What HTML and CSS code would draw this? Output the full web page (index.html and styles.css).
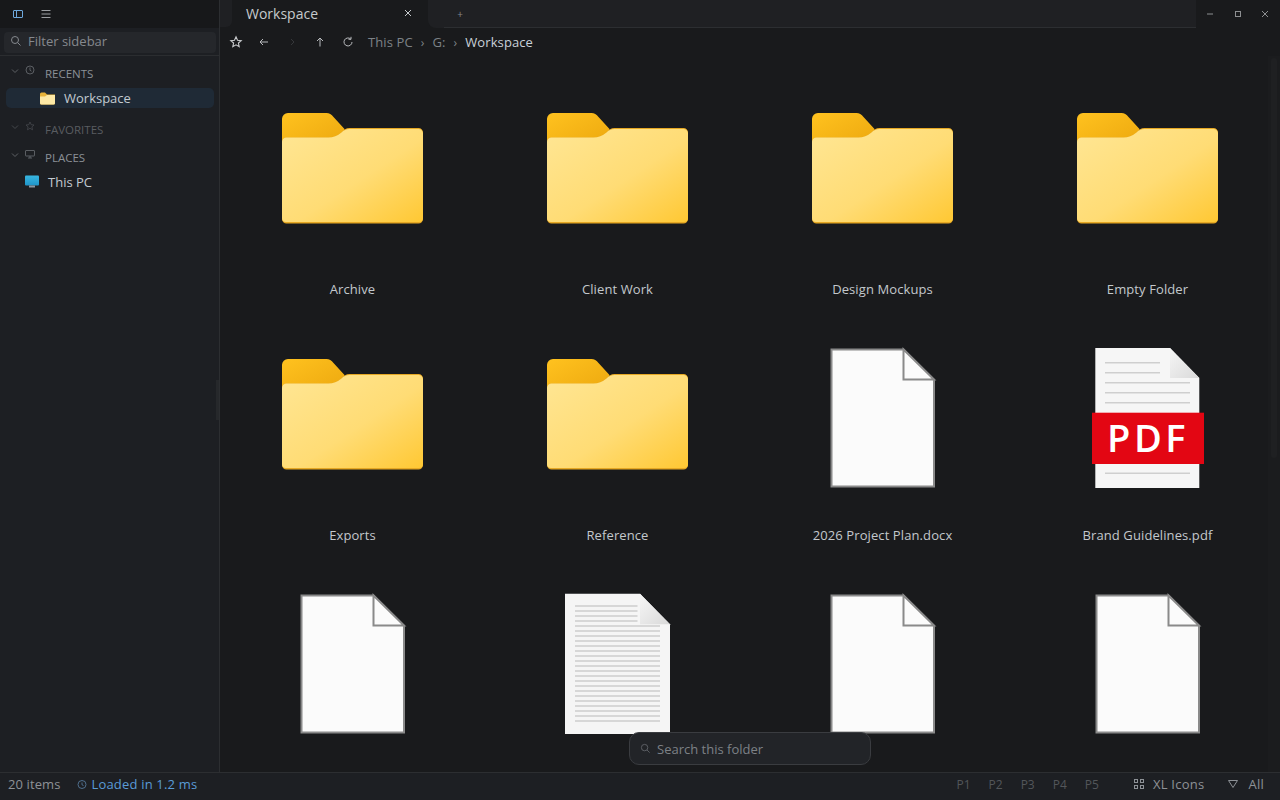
FILE: index.html
```html
<!DOCTYPE html>
<html lang="en">
<head>
<meta charset="utf-8">
<title>Workspace</title>
<link rel="stylesheet" href="styles.css">
</head>
<body>
<svg class="defs" width="0" height="0" aria-hidden="true">
  <defs>
    <linearGradient id="folderFront" x1="0" y1="0" x2="1" y2="1">
      <stop offset="0" stop-color="#ffe694"/>
      <stop offset="0.55" stop-color="#ffdc75"/>
      <stop offset="1" stop-color="#ffc833"/>
    </linearGradient>
    <linearGradient id="folderBack" x1="0" y1="0" x2="1" y2="1">
      <stop offset="0" stop-color="#ffc21f"/>
      <stop offset="1" stop-color="#eca70e"/>
    </linearGradient>
    <linearGradient id="foldGrad" x1="0" y1="0" x2="1" y2="1">
      <stop offset="0" stop-color="#f6f6f6"/>
      <stop offset="1" stop-color="#d9d9d9"/>
    </linearGradient>
    <symbol id="folder" viewBox="0.5 0 160 160">
      <path fill="url(#folderBack)" d="M9.500 52V31a6 6 0 0 1 6-6H54q4 0 7 4L72 41V60H9.500z"/>
      <path fill="#e6a823" d="M9.500 54a4.500 4.500 0 0 1 4.500-4.500H56q7 0 13-5q3-4.500 8-4.500H146a4.500 4.500 0 0 1 4.500 4.500V131a4.500 4.500 0 0 1-4.500 4.500H14a4.500 4.500 0 0 1-4.500-4.500z"/>
      <path fill="url(#folderFront)" d="M9.500 54a4.500 4.500 0 0 1 4.500-4.500H56q7 0 13-5q3-3.500 8-3.500H146a4.500 4.500 0 0 1 4.500 4.500V130a4 4 0 0 1-4 4H13.500a4 4 0 0 1-4-4z"/>
    </symbol>
    <symbol id="blank" viewBox="0.5 0 160 160">
      <path fill="#fbfbfb" stroke="#8a8a8a" stroke-width="2" d="M29 15.500H101L131.500 46V152.500H29z"/>
      <path fill="#fbfbfb" stroke="#8a8a8a" stroke-width="2" d="M101 15.500V45.500H131.500z"/>
    </symbol>
    <symbol id="pdf" viewBox="0.5 0 160 160">
      <path fill="#f6f6f6" d="M27.800 14H102.500L131.800 44V154H27.800z"/>
      <path fill="url(#foldGrad)" d="M102.500 14V44H131.800z"/>
      <path stroke="#cfcfcf" stroke-width="1.400" d="M37.500 28.700H92.500M37.500 38.700H92.500M37.500 48.700H122.500M37.500 58.700H122.500M37.500 68.700H122.500M37.500 139.300H122.500"/>
      <rect x="24.500" y="78.700" width="112" height="51.300" fill="#e30613"/>
      <text class="pdf-label" x="80.500" y="117.700" text-anchor="middle">PDF</text>
    </symbol>
    <symbol id="text" viewBox="0.5 0 160 160">
      <path fill="#f5f5f5" d="M27.500 13.700H102.500L132.500 44.300V154H27.500z"/>
      <path fill="url(#foldGrad)" d="M102.500 13.700V44.300H132.500z"/>
      <path stroke="#cdcdcd" stroke-width="1.500" d="M37.500 26H100M37.500 31H100M37.500 36H100M37.500 41H100M37.500 46H122.500M37.500 51H122.500M37.500 56H122.500M37.500 61H122.500M37.500 66H122.500M37.500 71H122.500M37.500 76H122.500M37.500 81H122.500M37.500 86H122.500M37.500 91H122.500M37.500 96H122.500M37.500 101H122.500M37.500 106H122.500M37.500 111H122.500M37.500 116H122.500M37.500 121H122.500M37.500 126H122.500M37.500 131H122.500M37.500 136H122.500M37.500 141H122.500"/>
    </symbol>
  </defs>
</svg>

<div class="app">
  <aside class="sidebar">
    <div class="side-top">
      <button class="icon-btn blue" aria-label="Toggle sidebar">
        <svg width="12" height="12" viewBox="0 0 12 12" fill="none" stroke="currentColor"><rect x="1.500" y="2.500" width="9" height="7" rx="0.500"/><path d="M4.500 2.500v7"/></svg>
      </button>
      <button class="icon-btn" aria-label="Menu">
        <svg width="12" height="12" viewBox="0 0 12 12" fill="none" stroke="currentColor"><path d="M1.500 2.500h9M1.500 6h9M1.500 9.500h9"/></svg>
      </button>
    </div>
    <div class="filter-wrap">
      <div class="filter">
        <svg width="12" height="12" viewBox="0 0 12 12" fill="none" stroke="currentColor"><circle cx="5" cy="5" r="3.500"/><path d="M7.700 7.700L10.500 10.500"/></svg>
        <span>Filter sidebar</span>
      </div>
    </div>
    <nav class="side-nav">
      <div class="section first">
        <svg class="chev" width="10" height="10" viewBox="0 0 10 10" fill="none" stroke="currentColor"><path d="M2 3.500L5 6.500L8 3.500"/></svg>
        <svg class="sec-icon" width="10" height="10" viewBox="0 0 10 10" fill="none" stroke="currentColor" stroke-width="0.800"><circle cx="5" cy="5" r="4"/><path d="M5 2.500V5.300L6.500 6.200"/></svg>
        <span>RECENTS</span>
      </div>
      <div class="side-row active">
        <svg class="row-folder" width="15" height="13" viewBox="0 0 15 13"><path fill="#e8b33a" d="M0 2a1.500 1.500 0 0 1 1.500-1.500H5L7 2.500H15V11a1.500 1.500 0 0 1-1.500 1.500H1.500A1.500 1.500 0 0 1 0 11z"/><path fill="#fde9a6" d="M0 4.500H5L7 3H15V11a1.500 1.500 0 0 1-1.500 1.500H1.500A1.500 1.500 0 0 1 0 11z"/></svg>
        <span>Workspace</span>
      </div>
      <div class="section dim">
        <svg class="chev" width="10" height="10" viewBox="0 0 10 10" fill="none" stroke="currentColor"><path d="M2 3.500L5 6.500L8 3.500"/></svg>
        <svg class="sec-icon" width="10" height="10" viewBox="0 0 10 10" fill="none" stroke="currentColor" stroke-width="0.800"><path d="M5 1L6.200 3.700L9 4L6.900 5.900L7.500 8.800L5 7.300L2.500 8.800L3.100 5.900L1 4L3.800 3.700z"/></svg>
        <span>FAVORITES</span>
      </div>
      <div class="section places">
        <svg class="chev" width="10" height="10" viewBox="0 0 10 10" fill="none" stroke="currentColor"><path d="M2 3.500L5 6.500L8 3.500"/></svg>
        <svg class="sec-icon" width="10" height="10" viewBox="0 0 10 10" fill="none" stroke="currentColor" stroke-width="0.800"><rect x="0.500" y="1.500" width="9" height="5.500" rx="0.500"/><path d="M5 7v2M3 9h4"/></svg>
        <span>PLACES</span>
      </div>
      <div class="side-row pc">
        <svg class="row-pc" width="14" height="14" viewBox="0 0 14 14"><defs><linearGradient id="screen" x1="0" y1="0" x2="0" y2="1"><stop offset="0" stop-color="#38b6e0"/><stop offset="1" stop-color="#1f94c8"/></linearGradient></defs><rect x="0" y="0.500" width="14" height="10" rx="1" fill="url(#screen)"/><rect x="4" y="10.500" width="6" height="2" fill="#8b96a0"/></svg>
        <span>This PC</span>
      </div>
    </nav>
    <div class="resize-grip"></div>
  </aside>

  <main class="main">
    <header class="tabbar">
      <div class="tab-lead"></div>
      <div class="tab">
        <span class="tab-title">Workspace</span>
        <svg class="tab-close" width="8" height="8" viewBox="0 0 8 8" fill="none" stroke="currentColor"><path d="M1 1L7 7M7 1L1 7"/></svg>
      </div>
      <div class="tab-rest">
        <div class="tab-line"><span class="tab-new">+</span></div>
      </div>
      <div class="win-controls">
        <svg width="10" height="10" viewBox="0 0 10 10" fill="none" stroke="currentColor"><path d="M2 5H8"/></svg>
        <svg width="10" height="10" viewBox="0 0 10 10" fill="none" stroke="currentColor"><rect x="2.500" y="2.500" width="5" height="5"/></svg>
        <svg width="10" height="10" viewBox="0 0 10 10" fill="none" stroke="currentColor"><path d="M2 2L8 8M8 2L2 8"/></svg>
      </div>
    </header>

    <div class="toolbar">
      <svg class="tool star" width="14" height="14" viewBox="0 0 14 14" fill="none" stroke="currentColor" stroke-width="1.100"><path d="M7 1.800L8.500 5.200L12.200 5.600L9.400 8L10.200 11.700L7 9.800L3.800 11.700L4.600 8L1.800 5.600L5.500 5.200z"/></svg>
      <svg class="tool" width="12" height="12" viewBox="0 0 12 12" fill="none" stroke="currentColor"><path d="M10 6H2M5 3L2 6L5 9"/></svg>
      <svg class="tool off" width="12" height="12" viewBox="0 0 12 12" fill="none" stroke="currentColor"><path d="M5 3L8 6L5 9"/></svg>
      <svg class="tool" width="12" height="12" viewBox="0 0 12 12" fill="none" stroke="currentColor"><path d="M6 10.500V2M3 5L6 2L9 5"/></svg>
      <svg class="tool" width="12" height="12" viewBox="0 0 12 12" fill="none" stroke="currentColor"><path d="M10 6a4 4 0 1 1-1.300-3M9 .800V3.300H6.500"/></svg>
      <div class="crumbs">
        <span>This PC</span><i>›</i><span>G:</span><i>›</i><span class="current">Workspace</span>
      </div>
    </div>

    <div class="content">
      <div class="grid">
        <div class="item"><svg class="big"><use href="#folder"/></svg><span>Archive</span></div>
        <div class="item"><svg class="big"><use href="#folder"/></svg><span>Client Work</span></div>
        <div class="item"><svg class="big"><use href="#folder"/></svg><span>Design Mockups</span></div>
        <div class="item"><svg class="big"><use href="#folder"/></svg><span>Empty Folder</span></div>
        <div class="item"><svg class="big"><use href="#folder"/></svg><span>Exports</span></div>
        <div class="item"><svg class="big"><use href="#folder"/></svg><span>Reference</span></div>
        <div class="item"><svg class="big"><use href="#blank"/></svg><span>2026 Project Plan.docx</span></div>
        <div class="item"><svg class="big"><use href="#pdf"/></svg><span>Brand Guidelines.pdf</span></div>
        <div class="item"><svg class="big"><use href="#blank"/></svg><span></span></div>
        <div class="item"><svg class="big"><use href="#text"/></svg><span></span></div>
        <div class="item"><svg class="big"><use href="#blank"/></svg><span></span></div>
        <div class="item"><svg class="big"><use href="#blank"/></svg><span></span></div>
      </div>
      <div class="scrollbar"><div class="thumb"></div></div>
      <div class="search">
        <svg width="11" height="11" viewBox="0 0 12 12" fill="none" stroke="currentColor"><circle cx="5" cy="5" r="3.500"/><path d="M7.700 7.700L10.500 10.500"/></svg>
        <span>Search this folder</span>
      </div>
    </div>
  </main>

  <footer class="status">
    <span class="count">20 items</span>
    <svg class="clock" width="12" height="12" viewBox="0 0 12 12" fill="none" stroke="currentColor"><circle cx="6" cy="6.500" r="4"/><path d="M6 4.500V6.800L7.500 7.500"/></svg>
    <span class="loaded">Loaded in 1.2 ms</span>
    <div class="status-right">
      <span class="pane">P1</span><span class="pane">P2</span><span class="pane">P3</span><span class="pane">P4</span><span class="pane">P5</span>
      <svg class="grid-ico" width="12" height="12" viewBox="0 0 12 12" fill="none" stroke="currentColor"><rect x="1.500" y="1.500" width="3" height="3"/><rect x="7.500" y="1.500" width="3" height="3"/><rect x="1.500" y="7.500" width="3" height="3"/><rect x="7.500" y="7.500" width="3" height="3"/></svg>
      <span class="view">XL Icons</span>
      <svg class="filter-ico" width="12" height="12" viewBox="0 0 12 12" fill="none" stroke="currentColor"><path d="M1.500 2.500H10.500L6 9.500z"/></svg>
      <span class="view">All</span>
    </div>
  </footer>
</div>
</body>
</html>
```

FILE: styles.css
```css
* { box-sizing: border-box; }
html, body { margin: 0; height: 100%; }
body {
  width: 1280px;
  height: 800px;
  overflow: hidden;
  background: #191a1c;
  color: #c8ccd0;
  font-family: "Open Sans", "Noto Sans", sans-serif;
  font-size: 13px;
}
.defs { position: absolute; }
.pdf-label {
  font-family: "Open Sans", sans-serif;
  font-size: 38px;
  font-weight: 600;
  letter-spacing: 3.5px;
  fill: #fff;
}
.app {
  display: grid;
  grid-template-columns: 220px 1fr;
  grid-template-rows: 772px 28px;
  width: 1280px;
  height: 800px;
}

/* Sidebar */
.sidebar {
  position: relative;
  background: #1d1f23;
  border-right: 1px solid #2c2e31;
  display: flex;
  flex-direction: column;
}
.side-top {
  height: 28px;
  background: #17181a;
  display: flex;
  align-items: center;
  gap: 16px;
  padding-left: 12px;
}
.icon-btn {
  display: flex;
  width: 12px;
  height: 12px;
  padding: 0;
  border: 0;
  background: none;
  color: #9a9da1;
}
.icon-btn.blue { color: #6ea8dc; }
.filter-wrap {
  height: 28px;
  padding: 4px 3px 2px 4px;
  border-bottom: 1px solid #2b2d30;
}
.filter {
  height: 21px;
  background: #25272b;
  border-radius: 4px;
  display: flex;
  align-items: center;
  gap: 6px;
  padding: 0 0 3px 6px;
  color: #85898e;
}
.side-nav { padding-top: 8px; }
.section {
  height: 20px;
  display: flex;
  align-items: center;
  padding: 0 0 2px 10px;
  font-size: 11.5px;
  color: #8b9096;
}
.section .chev { color: #5e6165; margin-right: 5px; margin-top: -4px; }
.section .sec-icon { color: #6b6f74; margin-right: 10px; margin-top: -6px; }
.section.dim { color: #595c60; margin-top: 12px; }
.section.dim .chev, .section.dim .sec-icon { color: #45484c; }
.section.places { margin-top: 8px; }
.side-row {
  height: 20px;
  margin: 4px 5px 0 6px;
  display: flex;
  align-items: center;
  border-radius: 5px;
  color: #c3cad1;
}
.side-row.active { background: #1f2a36; padding-left: 34px; }
.row-folder { margin-right: 9px; }
.side-row.pc { margin-top: 4px; padding-left: 19px; }
.row-pc { margin-right: 9px; }
.resize-grip {
  position: absolute;
  right: 0;
  top: 380px;
  width: 3px;
  height: 40px;
  background: #26282b;
}

/* Main */
.main {
  display: flex;
  flex-direction: column;
  min-width: 0;
  overflow: hidden;
}
.tabbar {
  height: 28px;
  display: flex;
  background: #191a1c;
}
.tab-lead {
  width: 12px;
  height: 27px;
  background: #1f2023;
  border-radius: 0 0 6px 0;
}
.tab {
  width: 196px;
  height: 28px;
  display: flex;
  align-items: center;
  justify-content: space-between;
  padding: 0 16px 2px 14px;
  font-size: 14px;
  color: #c6cacd;
}
.tab-rest {
  flex: 1;
  display: flex;
  padding-left: 16px;
  background: #1f2023;
  border-radius: 0 0 0 8px;
}
.tab-line {
  flex: 1;
  border-bottom: 1px solid #2c2e31;
}
.tab-new {
  display: block;
  width: 32px;
  text-align: center;
  color: #85878a;
  font-size: 10px;
  line-height: 28px;
}
.win-controls {
  width: 84px;
  display: flex;
  align-items: center;
  justify-content: space-between;
  padding: 0 10px 0 9px;
  color: #8d8f91;
}
.toolbar {
  height: 28px;
  display: flex;
  align-items: center;
  padding-left: 9px;
  color: #b8babd;
}
.tool { margin-right: 16px; flex: none; }
.tool.star { margin-right: 15px; color: #c9cbcd; }
.tool.off { color: #35373a; }
.crumbs {
  display: flex;
  align-items: center;
  color: #7d8287;
  margin-left: -2px;
  letter-spacing: 0.1px;
}
.crumbs i { font-style: normal; margin: 0 8px; font-size: 12px; }
.crumbs .current { color: #c9d1d9; }

.content {
  position: relative;
  flex: 1;
  overflow: hidden;
}
.grid {
  display: grid;
  grid-template-columns: repeat(4, 265px);
  grid-auto-rows: 246px;
  padding-top: 32px;
}
.item {
  display: flex;
  flex-direction: column;
  align-items: center;
  color: #c3c8cc;
}
.big { width: 160px; height: 160px; flex: none; }
.item span { margin-top: 32px; line-height: 18px; height: 18px; letter-spacing: 0.1px; }
.scrollbar {
  position: absolute;
  top: 0;
  right: 0;
  bottom: 0;
  width: 12px;
  padding: 2px 3px;
  background: #1b1c1e;
}
.thumb {
  height: 400px;
  border-radius: 3px;
  background: #1f2022;
}
.search {
  position: absolute;
  left: 409px;
  bottom: 7px;
  width: 242px;
  height: 33px;
  background: #222428;
  border: 1px solid #3a3c40;
  border-radius: 10px;
  display: flex;
  align-items: center;
  gap: 6px;
  padding-left: 10px;
  color: #7d8186;
}
.search svg { color: #5f6368; }

/* Status bar */
.status {
  grid-column: 1 / -1;
  background: #1d1f23;
  border-top: 1px solid #2c2e31;
  display: flex;
  align-items: center;
  padding: 0 16px 5px 8px;
  color: #8d9196;
}
.count { margin-right: 15px; letter-spacing: 0.1px; }
.clock { color: #4f6f8e; margin-right: 4px; }
.loaded { color: #5a9bd6; letter-spacing: 0.18px; }
.status-right { margin-left: auto; display: flex; align-items: center; }
.pane { font-size: 12px; color: #53565a; margin-right: 18px; }
.grid-ico { color: #8d9196; margin: 0 8px 0 16px; }
.view { color: #8d9196; letter-spacing: 0.25px; }
.filter-ico { margin: 0 9px 0 23px; color: #8d9196; }
```
